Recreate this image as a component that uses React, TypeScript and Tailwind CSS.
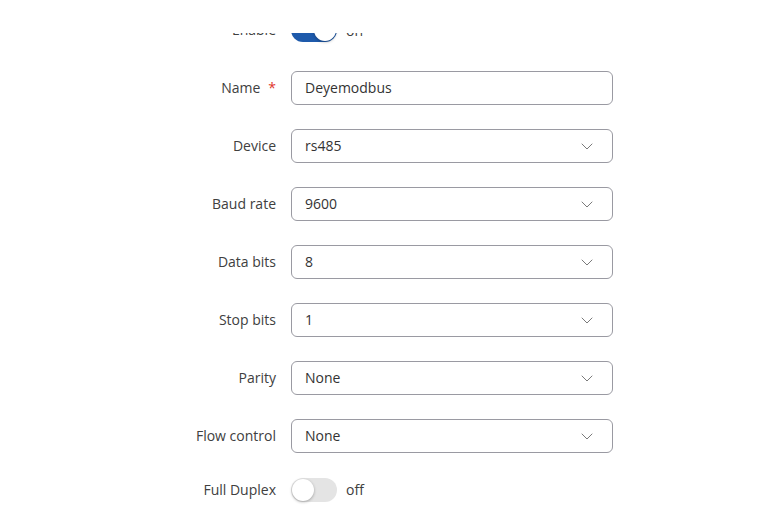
import React from 'react';

const SELECTS: { label: string; value: string }[] = [
  { label: 'Device', value: 'rs485' },
  { label: 'Baud rate', value: '9600' },
  { label: 'Data bits', value: '8' },
  { label: 'Stop bits', value: '1' },
  { label: 'Parity', value: 'None' },
  { label: 'Flow control', value: 'None' },
];

function Chevron() {
  return (
    <svg width="12" height="7" viewBox="0 0 12 7" fill="none" className="shrink-0">
      <path d="M1 1l5 5 5-5" stroke="#7a7a7a" strokeWidth="1" strokeLinecap="round" strokeLinejoin="round" />
    </svg>
  );
}

function Toggle({ on }: { on: boolean }) {
  return (
    <div
      className={`flex items-center w-[46px] h-[24px] rounded-full px-[1px] ${
        on ? 'bg-[#1e5aab] justify-end' : 'bg-[#e4e4e4] justify-start'
      }`}
    >
      <div className="w-[22px] h-[22px] rounded-full bg-white shadow-[0_1px_3px_rgba(0,0,0,0.3)]" />
    </div>
  );
}

function Row({ label, children, required }: { label: string; children: React.ReactNode; required?: boolean }) {
  return (
    <div className="flex items-center h-[34px]">
      <div className="w-[276px] text-right text-[14px] leading-[20px] text-[#404040] -mt-[1px]">
        {label}
        {required && <span className="text-[#e0352b] ml-[8px]">*</span>}
      </div>
      <div className="ml-[15px]">{children}</div>
    </div>
  );
}

export default function App() {
  return (
    <div className="w-[758px] h-[517px] bg-white overflow-hidden" style={{ fontFamily: '"Open Sans", "Liberation Sans", sans-serif' }}>
      <div className="h-[33px]" />
      <div className="h-[484px] overflow-hidden">
        <div className="-mt-[20px]">
          <Row label="Enable">
            <div className="flex items-center gap-[9px]">
              <Toggle on />
              <span className="text-[14px] text-[#404040]">on</span>
            </div>
          </Row>
          <div className="mt-[24px]">
            <Row label="Name" required>
              <div className="w-[322px] h-[34px] border border-[#9a9aa2] rounded-[6px] flex items-center px-[13px] text-[14px] text-[#333] pb-[1px]">
                Deyemodbus
              </div>
            </Row>
          </div>
          {SELECTS.map((s) => (
            <div key={s.label} className="mt-[24px]">
              <Row label={s.label}>
                <div className="w-[322px] h-[34px] border border-[#9a9aa2] rounded-[6px] flex items-center justify-between pl-[13px] pr-[19px] text-[14px] text-[#333]">
                  <span className="-mt-[1px]">{s.value}</span>
                  <Chevron />
                </div>
              </Row>
            </div>
          ))}
          <div className="mt-[20px]">
            <Row label="Full Duplex">
              <div className="flex items-center gap-[9px]">
                <Toggle on={false} />
                <span className="text-[14px] text-[#404040] -mt-[1px]">off</span>
              </div>
            </Row>
          </div>
        </div>
      </div>
    </div>
  );
}
